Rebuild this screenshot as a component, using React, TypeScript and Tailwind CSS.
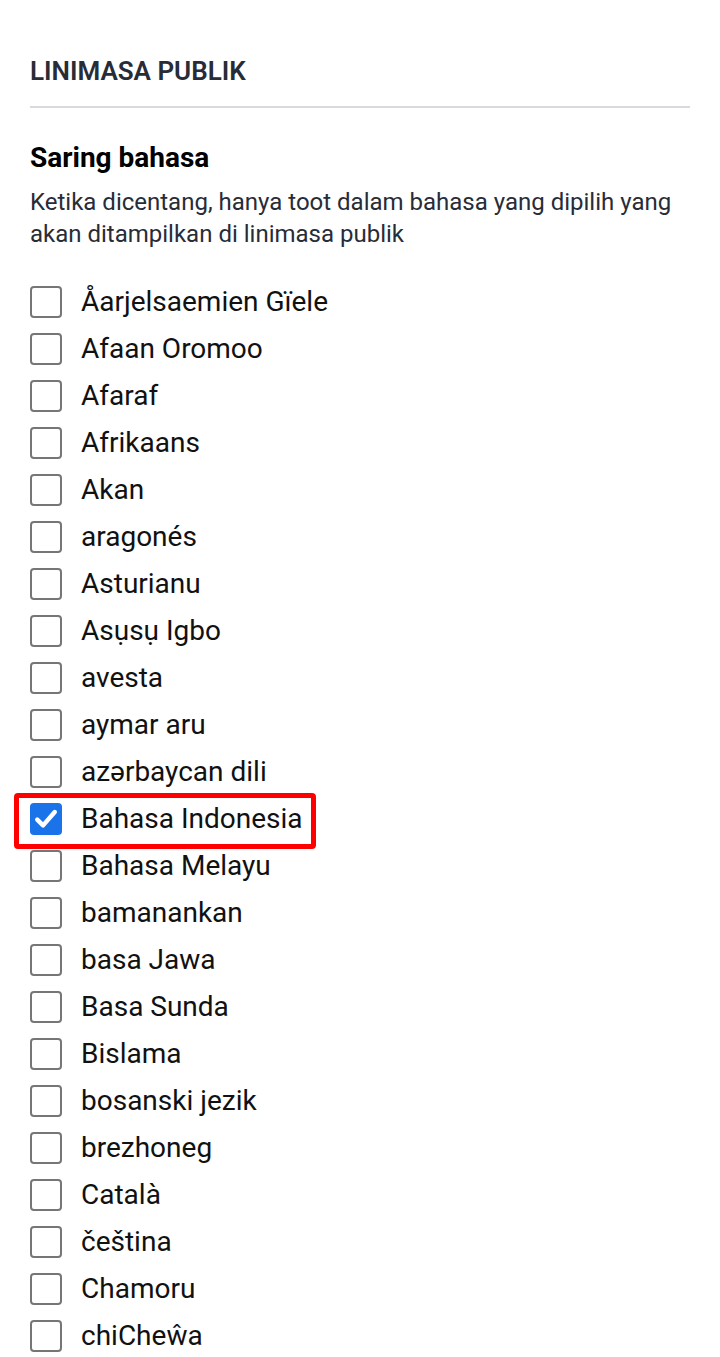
const languages = [
  "Åarjelsaemien Gïele",
  "Afaan Oromoo",
  "Afaraf",
  "Afrikaans",
  "Akan",
  "aragonés",
  "Asturianu",
  "Asụsụ Igbo",
  "avesta",
  "aymar aru",
  "azərbaycan dili",
  "Bahasa Indonesia",
  "Bahasa Melayu",
  "bamanankan",
  "basa Jawa",
  "Basa Sunda",
  "Bislama",
  "bosanski jezik",
  "brezhoneg",
  "Català",
  "čeština",
  "Chamoru",
  "chiCheŵa",
];

const CHECKED = "Bahasa Indonesia";

function LanguageRow({ name }: { name: string }) {
  const checked = name === CHECKED;

  return (
    <label className="relative flex h-[47px] items-center gap-[19px]">
      {checked ? (
        <span className="flex h-8 w-8 items-center justify-center rounded-[4px] bg-[#1a73e8]">
          <svg viewBox="0 0 24 24" className="h-7 w-7" fill="none">
            <path
              d="M4.5 12.5l5 5L19.5 6"
              stroke="white"
              strokeWidth="3.8"
              strokeLinecap="round"
              strokeLinejoin="round"
            />
          </svg>
        </span>
      ) : (
        <span className="h-8 w-8 rounded-[4px] border-2 border-[#767676] bg-white" />
      )}
      <span className="text-[28px] leading-[36px] text-[#111]">{name}</span>

      {/* highlight around the selected entry */}
      {checked && (
        <span className="pointer-events-none absolute left-[-16px] top-[-2px] h-[56px] w-[302px] rounded-[4px] border-[5px] border-[#ff0000]" />
      )}
    </label>
  );
}

export default function App() {
  return (
    <div className="min-h-[1357px] bg-white px-[30px] pt-[56px] font-['Roboto','Liberation_Sans',sans-serif]">
      <h2 className="text-[26px] font-semibold leading-[30px] text-[#282c37]">
        LINIMASA PUBLIK
      </h2>
      <div className="mt-[20px] h-[2px] bg-[#d9dae0]" />

      <h3 className="mt-[34px] text-[28px] font-bold leading-[32px] text-black">
        Saring bahasa
      </h3>
      <p className="mt-[12px] text-[24px] leading-[32px] text-[#282c37]">
        Ketika dicentang, hanya toot dalam bahasa yang dipilih yang akan
        ditampilkan di linimasa publik
      </p>

      <div className="mt-[28px] flex flex-col">
        {languages.map((name) => (
          <LanguageRow key={name} name={name} />
        ))}
      </div>
    </div>
  );
}
